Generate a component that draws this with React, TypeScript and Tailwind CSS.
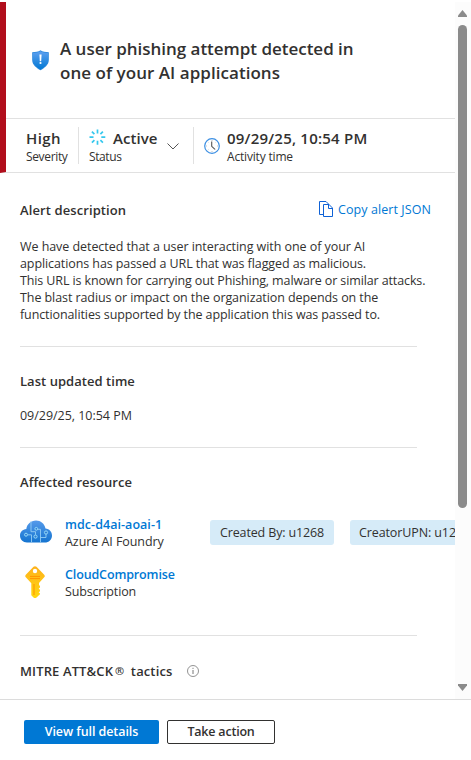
import React from "react";

function ShieldIcon() {
  return (
    <svg width="18" height="21" viewBox="0 0 18 21" className="shrink-0">
      <defs>
        <linearGradient id="shield" x1="0" y1="0" x2="0" y2="1">
          <stop offset="0" stopColor="#5ea0ef" />
          <stop offset="1" stopColor="#0078d4" />
        </linearGradient>
      </defs>
      <path d="M8.500 .3C10.500 2 13.500 1.900 16.800 2.200V10c0 5-4.500 8-8.300 10.300C4.700 18 .2 15 .2 10V2.200C3.500 1.900 6.500 2 8.500 .3Z" fill="#2a87dd" />
      <path d="M8.500 1.200C10.500 2.700 13.300 2.700 16 3V10c0 4.400-4 7.200-7.500 9.500C5 17.200 1 14.400 1 10V3C3.700 2.700 6.500 2.700 8.500 1.200Z" fill="url(#shield)" />
      <path d="M7.400 4.500h2.200l-.4 6.700H7.800Z" fill="#fff" />
      <circle cx="8.500" cy="13" r="1.100" fill="#fff" />
    </svg>
  );
}

function SpinnerIcon() {
  return (
    <svg width="17" height="17" viewBox="0 0 17 17" className="shrink-0" fill="none" stroke="#35c8ee" strokeWidth="1.700">
      <path d="M8.500 .5v4M8.500 11.800v4M.5 8.200h4M12.300 8.200h4M2.900 2.700l2.500 2.500M11.400 11.200l2.500 2.500M2.900 13.700l2.500-2.500M11.400 5.200l2.500-2.500" />
    </svg>
  );
}

function ClockIcon() {
  return (
    <svg width="16" height="16" viewBox="0 0 16 16" className="shrink-0" fill="none">
      <circle cx="8" cy="8" r="7.300" stroke="#3b8fe3" strokeWidth="1.200" />
      <path d="M8 2v1M8 13v1M2 8h1M13 8h1M3.800 3.800l.6.6M11.600 11.600l.6.6M12.200 3.800l-.6.6M3.800 12.200l.6-.6" stroke="#aaa" strokeWidth=".7" />
      <path d="M7.700 3.500V8.300L11 11.300" stroke="#555" strokeWidth="1.100" />
    </svg>
  );
}

function CopyIcon() {
  return (
    <svg width="14" height="16" viewBox="0 0 14 16" className="shrink-0" fill="none" stroke="#0f62d6" strokeWidth="1">
      <path d="M4 13.500H.5V.5H7L10 3.500M4.500 3.500H10L13.500 7V15.500H4.500ZM9.500 3.500V7.500H13.500" />
    </svg>
  );
}

function CloudIcon() {
  return (
    <svg width="32" height="23" viewBox="0 0 32 23" className="shrink-0" fill="none">
      <defs>
        <linearGradient id="cloud" x1="0" y1="0" x2="0" y2="1">
          <stop offset="0" stopColor="#559aea" />
          <stop offset="1" stopColor="#1474d0" />
        </linearGradient>
      </defs>
      <path d="M7 22.500C3 22.500 0 19.500 0 15.800 0 12 2.700 9.500 6.300 9.100 7 4 10.800.5 16 .5c4.700 0 8.500 3.200 9.500 8 3.800.3 6.500 3.200 6.500 6.900 0 4-3 7.100-7.200 7.100Z" fill="url(#cloud)" />
      <path d="M11 1.200V11.700h4.500v3M11.500 22.300v-7.500H7.500M20.500 22.300V9.300H17.500M20.500 17.500h5.500V14" stroke="#93cdf5" strokeWidth=".9" />
      <g fill="#337fd5" stroke="#9de2fb" strokeWidth=".9">
        <circle cx="6" cy="14.700" r="1.500" />
        <circle cx="15.500" cy="16.600" r="1.600" />
        <circle cx="16.300" cy="8.800" r="1.400" />
        <circle cx="26" cy="12.500" r="1.600" />
      </g>
    </svg>
  );
}

function KeyIcon() {
  return (
    <svg width="20" height="32" viewBox="0 0 20 32" className="shrink-0" fill="none">
      <defs>
        <linearGradient id="key" x1="0" y1="0" x2="0" y2="1">
          <stop offset="0" stopColor="#feb21c" />
          <stop offset="1" stopColor="#ffd70f" />
        </linearGradient>
      </defs>
      <path d="M8.500.8Q10-.4 11.500.8L19.200 8.700Q20.400 10 19.200 11.300L14 17V19L15 20V21.500L13.700 22.500 15 24V25.200L13.700 26.200 15 27.500V28.300L11.500 31.400Q10 32.500 8.500 31.400L6.300 29.200V17.200L.8 11.300Q-.3 10 .8 8.700Z" fill="url(#key)" />
      <circle cx="10" cy="5" r="2.200" fill="#fff" />
      <path d="M5 10.400h10M5 12.600h10" stroke="#ff9300" strokeWidth="1" />
      <path d="M9 18v11" stroke="#ff9c00" strokeWidth="1.200" />
    </svg>
  );
}

function InfoIcon() {
  return (
    <svg width="12" height="12" viewBox="0 0 12 12" className="shrink-0" fill="none" stroke="#777">
      <circle cx="6" cy="6" r="5.500" strokeWidth=".8" />
      <path d="M6 5v4M6 2.800v1.100" strokeWidth="1" />
    </svg>
  );
}

function Divider() {
  return <div className="h-px w-[397px] shrink-0 bg-[#e1e1e1]" />;
}

export default function App() {
  return (
    <div className="flex h-[760px] w-[471px] flex-col overflow-hidden bg-white font-['Open_Sans','Noto_Sans',sans-serif] text-[12.500px] leading-[17px] whitespace-nowrap text-[#323130]">
      <div className="flex h-[699px] shrink-0">
        <main className="flex w-[455px] shrink-0 flex-col overflow-hidden">
          <header className="mt-[2px] h-[171px] shrink-0 border-b border-l-[6px] border-b-[#e1e1e1] border-l-[#b10e1c]">
            <div className="flex h-[116px] pl-[26px] pt-[35px]">
              <div className="w-[28px] pt-[13px]"><ShieldIcon /></div>
              <h1 className="text-[17px] leading-6 font-semibold">
                <span className="block tracking-[-0.020px]">A user phishing attempt detected in</span>
                <span className="block tracking-[0.040px]">one of your AI applications</span>
              </h1>
            </div>
            <div className="flex h-[54px] border-t border-[#e1e1e1] pt-2">
              <div className="w-[72px] pl-5">
                <div className="pt-px pb-px text-[15px] leading-[20px] font-semibold tracking-[0.400px]">High</div>
                <div className="text-[12px] leading-[16px] tracking-[-0.350px]">Severity</div>
              </div>
              <div className="flex h-[37px] w-[115px] border-l border-[#e1e1e1] pl-[10px]">
                <div className="w-[78px]">
                  <div className="flex pt-px pb-px">
                    <div className="pt-px"><SpinnerIcon /></div>
                    <span className="ml-[7px] text-[15px] leading-[20px] font-semibold tracking-[0.050px]">Active</span>
                  </div>
                  <div className="text-[12px] leading-[16px] tracking-[-0.400px]">Status</div>
                </div>
                <svg width="12" height="7" viewBox="0 0 12 7" className="mt-4 shrink-0" fill="none" stroke="#555"><path d="M.5.5 6 6 11.500.5" /></svg>
              </div>
              <div className="flex h-[37px] border-l border-[#e1e1e1] pl-[10px]">
                <div className="w-[23px] pt-[11px]"><ClockIcon /></div>
                <div>
                  <div className="pt-px pb-px text-[15px] leading-[20px] font-semibold tracking-[0.220px]">09/29/25, 10:54 PM</div>
                  <div className="text-[12px] leading-[16px] tracking-[-0.180px]">Activity time</div>
                </div>
              </div>
            </div>
          </header>

          <section className="flex flex-col pl-5">
            <div className="mt-[27px] flex h-[18px] w-[411px] items-center justify-between">
              <h2 className="pt-[2px] text-[13px] font-semibold tracking-[0.100px]">Alert description</h2>
              <div className="flex items-center gap-[5px] text-[#0078d4]"><CopyIcon /><span className="tracking-[0.080px]">Copy alert JSON</span></div>
            </div>
            <div className="mt-[20px] h-[85px]">
              <div className="tracking-[-0.060px]">We have detected that a user interacting with one of your AI</div>
              <div className="tracking-[-0.090px]">applications has passed a URL that was flagged as malicious.</div>
              <div className="tracking-[-0.120px]">This URL is known for carrying out Phishing, malware or similar attacks.</div>
              <div className="tracking-[-0.080px]">The blast radius or impact on the organization depends on the</div>
              <div className="tracking-[-0.100px]">functionalities supported by the application this was passed to.</div>
            </div>
            <div className="h-[23px]" />
            <Divider />
            <h2 className="mt-[26px] text-[13px] font-semibold tracking-[0.040px]">Last updated time</h2>
            <div className="mt-[17px] tracking-[-0.030px]">09/29/25, 10:54 PM</div>
            <div className="h-[23px]" />
            <Divider />
            <h2 className="mt-[26px] text-[13px] font-semibold tracking-[0.040px]">Affected resource</h2>
            <div className="mt-[25px] flex h-[34px]">
              <div className="w-[45px] shrink-0 pt-[4px]"><CloudIcon /></div>
              <div className="w-[145px] shrink-0">
                <div className="font-semibold tracking-[0.050px] text-[#0078d4]">mdc-d4ai-aoai-1</div>
                <div className="tracking-[-0.060px]">Azure AI Foundry</div>
              </div>
              <div className="mt-1 flex h-[25px] shrink-0 gap-4 leading-[26px]">
                <div className="w-[124px] rounded-[3px] bg-[#d6ebf8] pl-[10px] tracking-[-0.140px]">Created By: u1268</div>
                <div className="w-[124px] rounded-[3px] bg-[#d6ebf8] pl-[9px] tracking-[-0.110px]">CreatorUPN: u1268</div>
              </div>
            </div>
            <div className="mt-[16px] flex h-[34px]">
              <div className="w-[45px] shrink-0 pl-[5px]"><KeyIcon /></div>
              <div>
                <div className="font-semibold tracking-[-0.130px] text-[#0078d4]">CloudCompromise</div>
                <div className="tracking-[-0.150px]">Subscription</div>
              </div>
            </div>
            <div className="h-[35px]" />
            <Divider />
            <div className="mt-[26px] flex h-[17px] items-center">
              <h2 className="w-[167px] text-[13px] font-semibold tracking-[0.120px]">MITRE ATT&amp;CK<span className="mr-[3px] ml-[2px] align-[1px] text-[11px]">®</span> tactics</h2>
              <InfoIcon />
            </div>
          </section>
        </main>
        <div className="mt-[2px] flex w-4 flex-col items-start bg-[#fcfcfc] pl-[3px]">
          <svg width="9" height="7" viewBox="0 0 9 7" className="mt-2" fill="#8b8b8b"><path d="M4.500 0 9 5.500V7H0V5.500Z" /></svg>
          <div className="mt-2 h-[483px] w-[9px] rounded-full bg-[#8b8b8b]" />
          <svg width="9" height="7" viewBox="0 0 9 7" className="mt-[176px]" fill="#8b8b8b"><path d="M0 0H9V1.500L4.500 7 0 1.500Z" /></svg>
        </div>
      </div>
      <footer className="flex h-[61px] gap-2 border-t border-[#dcdcdc] pl-6 pt-5 text-center font-semibold">
        <button className="flex h-6 w-[135px] justify-center rounded-[2px] bg-[#0078d4] leading-[23px] tracking-[-0.080px] text-white">View full details</button>
        <button className="flex h-6 w-[108px] justify-center rounded-[2px] border border-[#323130] leading-[21px] tracking-[-0.200px]">Take action</button>
      </footer>
    </div>
  );
}
